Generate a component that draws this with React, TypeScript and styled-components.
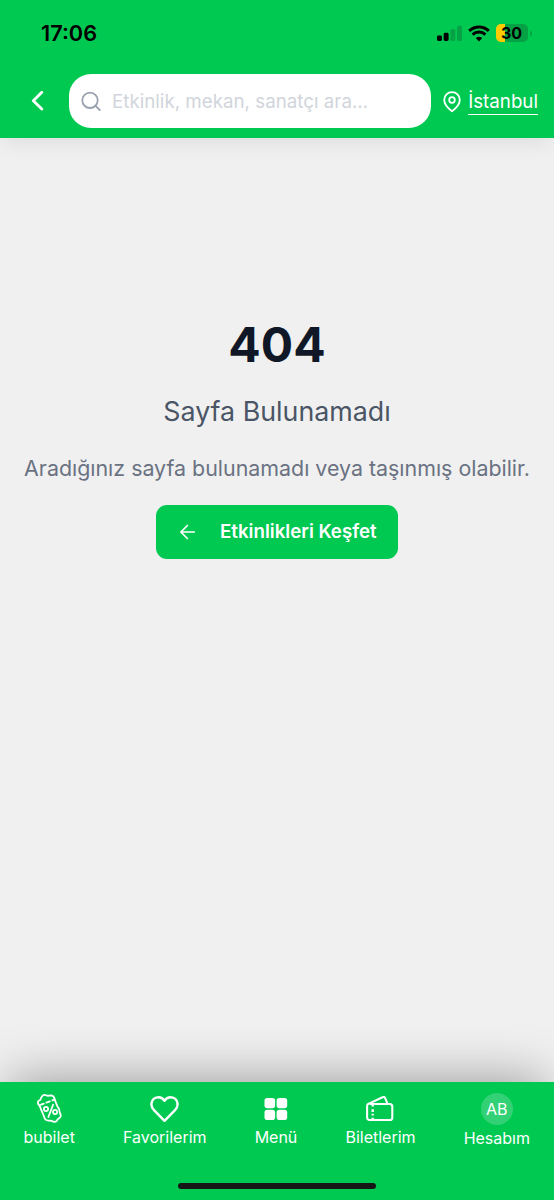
import React from "react";
import styled, { createGlobalStyle } from "styled-components";

const GREEN = "#00c952";

const GlobalStyle = createGlobalStyle`
  * { box-sizing: border-box; }
  body { margin: 0; background: #f0f0f0; font-family: Inter, "Liberation Sans", sans-serif; }
  button, input { font: inherit; border: 0; margin: 0; }
`;

const Screen = styled.div`
  width: 554px;
  height: 1200px;
  display: flex;
  flex-direction: column;
  background: #f0f0f0;
  overflow: hidden;
`;

const Header = styled.header`
  height: 138px;
  flex: none;
  background: ${GREEN};
  box-shadow: 0 10px 18px -4px rgba(0, 0, 0, 0.07);
`;

const StatusBar = styled.div`
  height: 74px;
  padding: 0 22px 8px 41px;
  display: flex;
  align-items: center;
  justify-content: space-between;
`;

const Clock = styled.time`
  font-size: 21.7px;
  font-weight: 600;
  color: #000;
`;

const StatusIcons = styled.div`
  display: flex;
  align-items: center;
`;

const Battery = styled.div`
  position: relative;
  width: 32px;
  height: 18px;
  margin: 0 4px 0 6px;
  border-radius: 5px;
  background: linear-gradient(90deg, #ffcc00 9px, #05a145 9px);
  color: #000;
  font-size: 16px;
  font-weight: 700;
  line-height: 18.5px;
  text-align: center;
  padding-right: 1px;

  &::after {
    content: "";
    position: absolute;
    right: -3.5px;
    top: 6.5px;
    width: 2px;
    height: 5px;
    border-radius: 0 2px 2px 0;
    background: #05a145;
  }
`;

const SearchRow = styled.div`
  display: flex;
  align-items: center;
  height: 54px;
  padding-right: 16px;
`;

const BackButton = styled.button`
  width: 69px;
  height: 54px;
  padding: 0 0 0 31px;
  display: flex;
  align-items: center;
  background: none;
`;

const SearchBox = styled.label`
  width: 362px;
  height: 54px;
  border-radius: 22px;
  background: #fff;
  display: flex;
  align-items: center;
  padding-left: 12px;
  gap: 11px;
`;

const SearchInput = styled.input`
  width: 300px;
  padding: 0;
  background: none;
  outline: none;
  font-size: 18.75px;
  &::placeholder { color: #d1d5dc; opacity: 1; }
`;

const City = styled.button`
  margin-left: auto;
  padding: 2px 0 0;
  display: flex;
  align-items: center;
  gap: 7px;
  background: none;
  color: #fff;
`;

const CityName = styled.span`
  font-size: 18.75px;
  line-height: 25px;
  border-bottom: 1.5px solid #fff;
`;

const Main = styled.main`
  flex: 1;
  display: flex;
  flex-direction: column;
  align-items: center;
  padding-top: 180px;
  text-align: center;
  white-space: nowrap;
`;

const Code = styled.h1`
  margin: 0;
  font-size: 48px;
  line-height: 54px;
  font-weight: 700;
  color: #101828;
`;

const Title = styled.h2`
  margin: 21px 0 0;
  font-size: 26.8px;
  line-height: 36px;
  font-weight: 400;
  color: #4a5565;
`;

const Description = styled.p`
  margin: 23px 0 0;
  font-size: 21.4px;
  line-height: 32px;
  color: #6a7282;
`;

const ExploreButton = styled.button`
  margin-top: 21px;
  width: 242px;
  height: 53.5px;
  padding: 0 0 0 21px;
  display: flex;
  align-items: center;
  gap: 22px;
  border-radius: 11px;
  background: ${GREEN};
  color: #fff;
  font-size: 18.7px;
  line-height: 24px;
  font-weight: 600;
`;

const ExploreLabel = styled.span`
  padding-top: 1px;
`;

const BottomNav = styled.nav`
  position: relative;
  height: 118px;
  flex: none;
  background: ${GREEN};
  color: #fff;
  display: flex;
  flex-direction: column;
  align-items: center;
  justify-content: space-between;
  padding-bottom: 11px;
  box-shadow: 0 -13px 50px -9px rgba(0, 0, 0, 0.34);
`;

const Tabs = styled.div`
  width: 100%;
  display: flex;
  justify-content: space-between;
  padding: 11px 24px 0 23.5px;
`;

const Tab = styled.button`
  padding: 0;
  display: flex;
  flex-direction: column;
  align-items: center;
  background: none;
  color: #fff;
  font-size: 16px;
  line-height: 22px;
`;

const TabIcon = styled.span<{ $height?: number }>`
  height: ${({ $height }) => $height ?? 32}px;
  display: flex;
  align-items: flex-start;
  justify-content: center;
  margin-bottom: 1px;
`;

const Avatar = styled.span`
  width: 32px;
  height: 32px;
  border-radius: 50%;
  background: #33d175;
  font-size: 16px;
  line-height: 32px;
  text-align: center;
`;

const HomeIndicator = styled.div`
  width: 198px;
  height: 6px;
  border-radius: 3px;
  background: #161616;
`;

const SignalIcon = () => (
  <svg width="26" height="17" viewBox="0 0 26 17">
    <rect x="0" y="10.5" width="4.9" height="5.5" rx="1.4" fill="#000" />
    <rect x="6.7" y="7.7" width="4.9" height="8.3" rx="1.4" fill="#000" />
    <rect x="13.4" y="4.2" width="4.9" height="11.8" rx="1.4" fill="#05a145" />
    <rect x="20.1" y="0.8" width="4.9" height="15.2" rx="1.4" fill="#05a145" />
  </svg>
);

const WifiGlyph = styled.svg`
  margin-left: 5px;
`;

const WifiIcon = () => (
  <WifiGlyph width="22" height="17" viewBox="0 0 22 17" fill="none" stroke="#000">
    <path d="M1.2 5.9C6.7 .6 15.3 .6 20.8 5.9" strokeWidth="3" />
    <path d="M4.6 9.6C8.2 6.2 13.8 6.2 17.4 9.6" strokeWidth="2.9" />
    <path d="M11 16.4 7.8 13C9.6 11.3 12.4 11.3 14.2 13Z" fill="#000" stroke="none" />
  </WifiGlyph>
);

const CouponIcon = () => (
  <svg width="28" height="32" viewBox="-0.8 0.2 28 32" fill="none" stroke="#fff" strokeWidth="1.8" strokeLinecap="round" strokeLinejoin="round">
    <path d="M3.2 12.2C1.2 10.2 2 7.5 4.6 7C5.2 4 7.5 1.2 10.2 2.4C12.3 3.7 13.8 2.3 16.1 2.8C18.3 3.3 18.8 5.2 19.1 7.2L21.2 12.6C21.5 14.8 24.2 15.8 23.7 18.2C23.4 19.9 25.4 21.3 24.9 23.6C24.5 25.5 22.2 25.5 21.5 27C20.5 29.5 18.2 29.5 16 28.1C13.7 27.2 11.6 28.6 9.8 26.9C8.4 25.4 8.2 23.5 7.4 21.7L5.2 16.6C4.8 15 4.1 13.7 3.2 12.2Z" />
    <path d="M4.6 12 18.8 6.8" strokeDasharray="3.6 2.8" />
    <path d="m17.3 12-4.7 12.2" />
    <circle cx="10.2" cy="16.2" r="2.1" />
    <circle cx="19.3" cy="19.2" r="2.1" />
  </svg>
);

const HeartIcon = () => (
  <svg width="29" height="32" viewBox="0 -2 29 32" fill="none" stroke="#fff" strokeWidth="2.4" strokeLinejoin="round">
    <path d="M14.5 25.8 4 15.2C-.3 11 1.1 4.2 6.2 2.7C9.5 1.7 12.6 3 14.5 5.7C16.4 3 19.5 1.7 22.8 2.7C27.9 4.2 29.3 11 25 15.2Z" />
  </svg>
);

const GridIcon = () => (
  <svg width="24" height="32" viewBox="0 -4 24 32" fill="#fff">
    <rect x="0.5" y="0.9" width="10.6" height="10.4" rx="2.8" />
    <rect x="12.6" y="0.9" width="10.6" height="10.4" rx="2.8" />
    <rect x="0.5" y="12.7" width="10.6" height="10.4" rx="2.8" />
    <rect x="12.6" y="12.7" width="10.6" height="10.4" rx="2.8" />
  </svg>
);

const TicketsIcon = () => (
  <svg width="28" height="32" viewBox="0.5 -2 28 32" fill="none" stroke="#fff" strokeWidth="2.1" strokeLinejoin="round">
    <path d="M4.2 9H24.2Q26.8 9 26.8 11.6V22.4Q26.8 25 24.2 25H4.2Q1.6 25 1.6 22.4V11.2Q1.6 9.3 3.4 8.6L17 2.3Q19 1.4 19.8 3.3L21.8 8.4" />
    <path d="M7.2 8.4V11.6M7.2 14.2V17M7.2 18.8V20.4M7.2 22.8V25" strokeWidth="2.4" />
  </svg>
);

export default function App() {
  return (
    <Screen>
      <GlobalStyle />
      <Header>
        <StatusBar>
          <Clock>17:06</Clock>
          <StatusIcons>
            <SignalIcon />
            <WifiIcon />
            <Battery>30</Battery>
          </StatusIcons>
        </StatusBar>
        <SearchRow>
          <BackButton aria-label="Geri">
            <svg width="13" height="20" viewBox="0 0 13 20" fill="none" stroke="#fff" strokeWidth="2.8" strokeLinecap="round" strokeLinejoin="round">
              <path d="M10.8 1.3 2.3 9.7l8.5 8.4" />
            </svg>
          </BackButton>
          <SearchBox>
            <svg width="20" height="20" viewBox="0 0 20 20" fill="none" stroke="#99a1af" strokeWidth="1.8" strokeLinecap="round">
              <circle cx="9" cy="9.3" r="7.7" />
              <path d="m14.6 14.9 4.1 4.1" />
            </svg>
            <SearchInput placeholder="Etkinlik, mekan, sanatçı ara..." />
          </SearchBox>
          <City>
            <svg width="18" height="22" viewBox="0 0 18 22" fill="none" stroke="#fff" strokeWidth="1.8">
              <path d="M9 20.2C7 18.8 1.2 14 1.2 8.8A7.8 7.6 0 0 1 16.8 8.8C16.8 14 11 18.8 9 20.2Z" />
              <circle cx="9" cy="9" r="2.8" />
            </svg>
            <CityName>İstanbul</CityName>
          </City>
        </SearchRow>
      </Header>
      <Main>
        <Code>404</Code>
        <Title>Sayfa Bulunamadı</Title>
        <Description>Aradığınız sayfa bulunamadı veya taşınmış olabilir.</Description>
        <ExploreButton>
          <svg width="21" height="20" viewBox="0 0 21 20" fill="none" stroke="#fff" strokeWidth="1.7" strokeLinecap="round" strokeLinejoin="round">
            <path d="M17.2 10H4M10.4 3.5 3.9 10l6.5 6.5" />
          </svg>
          <ExploreLabel>Etkinlikleri Keşfet</ExploreLabel>
        </ExploreButton>
      </Main>
      <BottomNav>
        <Tabs>
          <Tab><TabIcon><CouponIcon /></TabIcon>bubilet</Tab>
          <Tab><TabIcon><HeartIcon /></TabIcon>Favorilerim</Tab>
          <Tab><TabIcon><GridIcon /></TabIcon>Menü</Tab>
          <Tab><TabIcon><TicketsIcon /></TabIcon>Biletlerim</Tab>
          <Tab><TabIcon $height={33}><Avatar>AB</Avatar></TabIcon>Hesabım</Tab>
        </Tabs>
        <HomeIndicator />
      </BottomNav>
    </Screen>
  );
}
